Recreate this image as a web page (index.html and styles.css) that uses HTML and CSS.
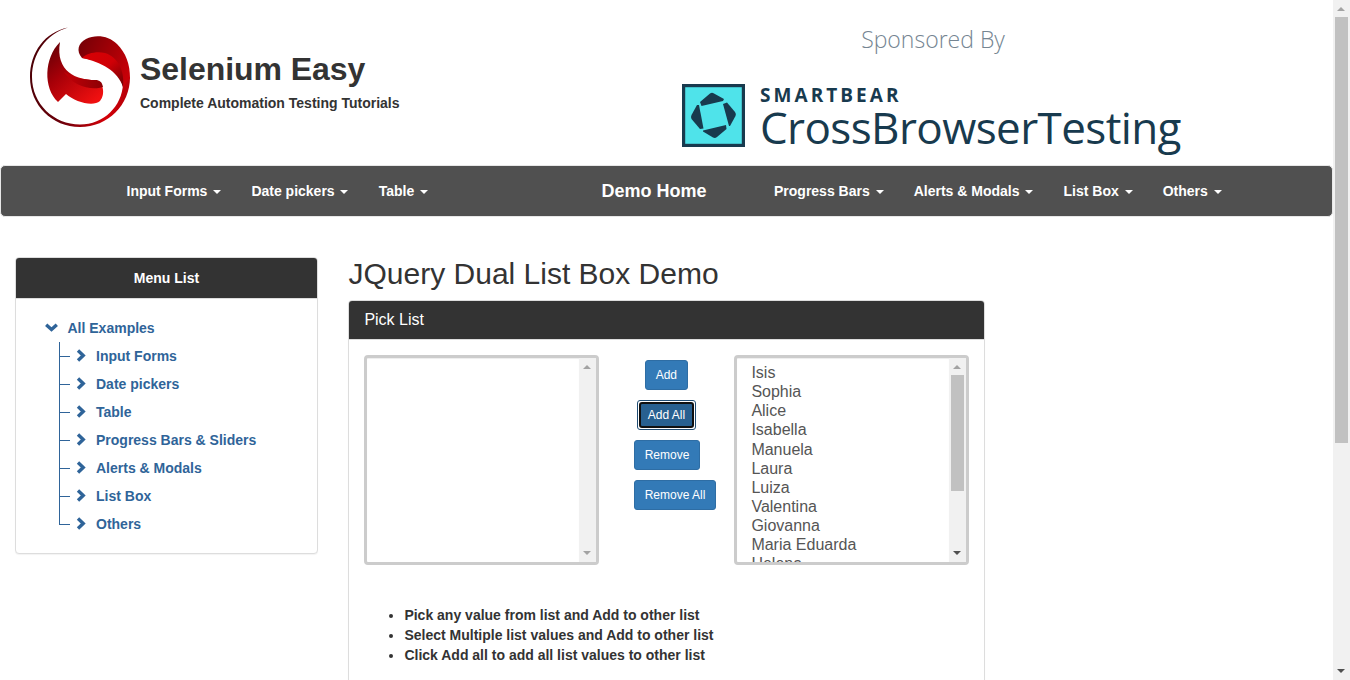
FILE: index.html
```html
<!DOCTYPE html>
<html lang="en">
<head>
<meta charset="utf-8">
<title>Selenium Easy - JQuery Dual List Box Demo</title>
<link rel="stylesheet" href="styles.css">
</head>
<body>
<div class="page">
  <header class="header">
    <div class="brand">
      <svg class="brand-logo" viewBox="0 0 100 100" width="100" height="100">
        <defs>
          <linearGradient id="ring" x1="0" y1=".3" x2="1" y2=".5"><stop offset="0" stop-color="#4a0006"/><stop offset=".45" stop-color="#70000a"/><stop offset=".85" stop-color="#d40008"/><stop offset="1" stop-color="#b80008"/></linearGradient>
          <linearGradient id="upper" x1="0" y1="0.2" x2="1" y2=".7"><stop offset="0" stop-color="#780006"/><stop offset=".6" stop-color="#a80006"/><stop offset="1" stop-color="#c80008"/></linearGradient>
          <linearGradient id="bright" x1="0" y1="0" x2="1" y2="1"><stop offset="0" stop-color="#d80004"/><stop offset=".5" stop-color="#d00006"/><stop offset="1" stop-color="#700004"/></linearGradient>
          <linearGradient id="lower" x1="0" y1="0" x2=".8" y2="1"><stop offset="0" stop-color="#5c0006"/><stop offset=".45" stop-color="#a80008"/><stop offset="1" stop-color="#f01010"/></linearGradient>
          <linearGradient id="fold" x1="0" y1="0" x2="1" y2="0"><stop offset="0" stop-color="#c40008"/><stop offset="1" stop-color="#8c0004"/></linearGradient>
        </defs>
        <path fill="url(#ring)" d="M38 .4C15 5 0 25 0 50c0 28 22 50 50 50s50-22 50-50L93 57C92 79 74 97.500 50 97.500 24 97.500 2 77 2 50 2 27 16 7 38 .4Z"/>
        <path fill="url(#upper)" d="M52 31C46 24 48 16 56 12 66 7 79 9 87 17c9 9 13 20 13 34l-7 9C91 45 75 34 52 31Z"/>
        <path fill="url(#bright)" d="M52 31C57 26 67 24 75 26 88 30 95 44 93 60 88 44 71 35 52 31Z"/>
        <path fill="url(#lower)" d="M30 15C14 31 13 61 28 75L36 67C45 75 63 80 70 74 76 67 73 54 65 53 47 53 25 45 30 15Z"/>
        <path fill="url(#fold)" d="M34 45C43 59 61 64 73 60 72 55 70 53 65 53 55 53 43 51 34 45Z"/>
      </svg>
      <div class="brand-text">
        <h1 class="brand-name">Selenium Easy</h1>
        <div class="brand-tagline">Complete Automation Testing Tutorials</div>
      </div>
    </div>
    <div class="sponsor">
      <div class="sponsor-label">Sponsored By</div>
      <div class="sponsor-row">
        <svg class="sponsor-mark" viewBox="0 0 63 63" width="63" height="63">
          <rect x="1.6" y="1.6" width="59.8" height="59.8" fill="#4fe3ea" stroke="#183a4e" stroke-width="3.2"/>
          <g fill="#183a4e">
            <path d="M19.500 22 18 18 28 9.500Q30 8 32 9.500L42 15 41 17Z"/>
            <path d="M41 20 45 18.500 53 28Q54.500 30 53.500 32L48 42 47 42Z"/>
            <path d="M44 41 44.500 45 35 53Q33 54.500 31 53.500L21 47.500 21 46.500Z"/>
            <path d="M21.500 44.500 18 45 9.500 35Q8.500 33 9.500 31L15 21 17 21Z"/>
          </g>
        </svg>
        <div>
          <div class="sponsor-company">SMARTBEAR</div>
          <div class="sponsor-product">CrossBrowserTesting</div>
        </div>
      </div>
    </div>
  </header>

  <nav class="navbar">
    <div class="nav-group nav-left">
      <a class="nav-link">Input Forms<i class="caret"></i></a>
      <a class="nav-link">Date pickers<i class="caret"></i></a>
      <a class="nav-link">Table<i class="caret"></i></a>
    </div>
    <a class="nav-home">Demo Home</a>
    <div class="nav-group">
      <a class="nav-link">Progress Bars<i class="caret"></i></a>
      <a class="nav-link">Alerts &amp; Modals<i class="caret"></i></a>
      <a class="nav-link">List Box<i class="caret"></i></a>
      <a class="nav-link">Others<i class="caret"></i></a>
    </div>
  </nav>

  <div class="columns">
    <aside class="panel sidebar">
      <div class="panel-head menu-head">Menu List</div>
      <div class="tree">
        <a class="tree-root"><svg class="chevron-down" viewBox="0 0 13 9" width="13" height="9"><path d="M1.2 1.8 6.5 6.5 11.8 1.8"/></svg>All Examples</a>
        <ul class="tree-list">
          <li class="tree-item"><svg class="chevron" viewBox="0 0 10 13" width="10" height="13"><path d="M2 1.6 7.2 6.5 2 11.4"/></svg>Input Forms</li>
          <li class="tree-item"><svg class="chevron" viewBox="0 0 10 13" width="10" height="13"><path d="M2 1.6 7.2 6.5 2 11.4"/></svg>Date pickers</li>
          <li class="tree-item"><svg class="chevron" viewBox="0 0 10 13" width="10" height="13"><path d="M2 1.6 7.2 6.5 2 11.4"/></svg>Table</li>
          <li class="tree-item"><svg class="chevron" viewBox="0 0 10 13" width="10" height="13"><path d="M2 1.6 7.2 6.5 2 11.4"/></svg>Progress Bars &amp; Sliders</li>
          <li class="tree-item"><svg class="chevron" viewBox="0 0 10 13" width="10" height="13"><path d="M2 1.6 7.2 6.5 2 11.4"/></svg>Alerts &amp; Modals</li>
          <li class="tree-item"><svg class="chevron" viewBox="0 0 10 13" width="10" height="13"><path d="M2 1.6 7.2 6.5 2 11.4"/></svg>List Box</li>
          <li class="tree-item"><svg class="chevron" viewBox="0 0 10 13" width="10" height="13"><path d="M2 1.6 7.2 6.5 2 11.4"/></svg>Others</li>
        </ul>
      </div>
    </aside>

    <main class="main">
      <h2 class="title">JQuery Dual List Box Demo</h2>
      <section class="panel picker">
        <div class="panel-head pick-head">Pick List</div>
        <div class="pick-body">
          <div class="pick-row">
            <div class="listbox">
              <div class="options"></div>
              <div class="scrollbar">
                <i class="arrow arrow-up muted"></i>
                <i class="arrow arrow-down muted"></i>
              </div>
            </div>
            <div class="actions">
              <button class="btn btn-add">Add</button>
              <button class="btn btn-add-all">Add All</button>
              <button class="btn">Remove</button>
              <button class="btn">Remove All</button>
            </div>
            <div class="listbox">
              <div class="options">
                <div>Isis</div><div>Sophia</div><div>Alice</div><div>Isabella</div><div>Manuela</div><div>Laura</div><div>Luiza</div><div>Valentina</div><div>Giovanna</div><div>Maria Eduarda</div><div>Helena</div>
              </div>
              <div class="scrollbar">
                <i class="arrow arrow-up muted"></i>
                <span class="thumb list-thumb"></span>
                <i class="arrow arrow-down"></i>
              </div>
            </div>
          </div>
          <ul class="notes">
            <li>Pick any value from list and Add to other list</li>
            <li>Select Multiple list values and Add to other list</li>
            <li>Click Add all to add all list values to other list</li>
          </ul>
        </div>
      </section>
    </main>
  </div>
</div>
<div class="scrollbar page-scrollbar">
  <i class="arrow arrow-up muted"></i>
  <span class="thumb page-thumb"></span>
  <i class="arrow arrow-down"></i>
</div>
</body>
</html>
```
FILE: styles.css
```css
* { box-sizing: border-box; }
body {
  margin: 0;
  height: 680px;
  display: flex;
  overflow: hidden;
  background: #fff;
  color: #333;
  font: 14px/20px "Liberation Sans", Arial, sans-serif;
}
h1, h2, ul { margin: 0; padding: 0; font-weight: inherit; }
.page { width: 1333px; height: 680px; overflow: hidden; }

.header { display: flex; height: 165px; padding: 26px 0 0 30px; }
.brand { display: flex; gap: 10px; width: 652px; padding-top: 1px; }
.brand-logo { flex: none; }
.brand-text { padding-top: 22px; }
.brand-name { font-size: 32px; line-height: 40px; font-weight: bold; letter-spacing: -.05px; white-space: nowrap; }
.brand-tagline { padding-top: 4px; font-weight: bold; white-space: nowrap; }
.sponsor { width: 502px; font-family: "Open Sans", sans-serif; }
.sponsor-label { height: 58px; line-height: 26px; text-align: center; font-size: 23px; font-weight: 300; color: #758592; }
.sponsor-row { display: flex; gap: 15px; color: #183a4e; }
.sponsor-mark { flex: none; }
.sponsor-company { height: 21px; font-size: 19px; line-height: 22px; font-weight: 700; letter-spacing: 3.05px; }
.sponsor-product { font-size: 44px; line-height: 44px; letter-spacing: -.6px; white-space: nowrap; }

.navbar {
  display: flex;
  align-items: center;
  height: 52px;
  padding-left: 125.5px;
  background: #505050;
  border: 1px solid #e7e7e7;
  border-radius: 5px;
  color: #fff;
  font-weight: bold;
}
.nav-group { display: flex; gap: 30.2px; }
.nav-left { width: 475px; }
.nav-link { display: flex; align-items: center; gap: 5.8px; white-space: nowrap; }
.caret { border: 4px solid transparent; border-top-color: #fff; border-bottom: 0; margin-top: 2px; }
.nav-home { width: 172.5px; font-size: 18px; }

.columns { display: flex; gap: 30px; align-items: flex-start; padding: 40px 0 0 15px; }
.panel { border: 1px solid #ddd; border-radius: 4px; background: #fff; box-shadow: 0 1px 1px rgba(0, 0, 0, .05); }
.panel-head { background: #333; color: #fff; border-bottom: 1px solid #ddd; border-radius: 3px 3px 0 0; }
.sidebar { width: 303px; height: 297px; }
.menu-head { height: 41px; line-height: 40px; text-align: center; font-weight: bold; }
.tree { padding: 19px 0 0 29px; color: #2f6499; font-weight: bold; }
.tree-root { display: flex; align-items: center; gap: 9.5px; height: 20px; }
.chevron-down, .chevron { fill: none; stroke: #2f6499; stroke-width: 3.4; margin-bottom: 2px; }
.tree-list { list-style: none; margin: 4px 0 0 14px; }
.tree-item { position: relative; display: flex; align-items: center; gap: 10px; height: 28px; padding-left: 17px; }
.tree-item::before { content: ""; position: absolute; left: 0; top: -15px; width: 10px; height: 29px; border: solid #2f6499; border-width: 0 0 1px 1px; }
.tree-item:first-child::before { top: 0; height: 14px; }

.main { width: 637px; }
.title { height: 43px; padding-left: .5px; line-height: 33px; font-size: 30px; white-space: nowrap; }
.picker { height: 450px; }
.pick-head { height: 39px; line-height: 37px; padding-left: 15.4px; font-size: 16px; }
.pick-body { padding: 15px; }
.pick-row { display: flex; height: 210px; }
.listbox { display: flex; width: 235px; height: 210px; border: 3px solid #ccc; border-radius: 4px; overflow: hidden; }
.options { flex: 1; padding: 5px 0 0 14.4px; font-size: 16px; line-height: 19.12px; color: #555; box-shadow: inset 0 1px 1px rgba(0, 0, 0, .075); }
.actions { display: flex; flex-direction: column; align-items: flex-start; gap: 10px; width: 135px; padding: 5px 0 0 35px; }
.btn { height: 30px; padding: 0 9.7px; border: 1px solid #2e6da4; border-radius: 3px; background: #337ab7; color: #fff; font: 12px/18px "Liberation Sans", Arial, sans-serif; white-space: nowrap; }
.btn-add { margin-left: 11px; }
.btn-add-all { width: 59px; margin-left: 3px; padding: 0; background: #fff; border-color: #204d74; position: relative; z-index: 0; }
.btn-add-all::before { content: ""; position: absolute; z-index: -1; inset: 1px; border: 2px solid #101010; border-radius: 3px; background: #286090; }
.notes { padding: 40px 0 0 40.4px; font-weight: bold; }

.scrollbar { display: flex; flex-direction: column; flex: none; width: 17px; background: #f1f1f1; }
.arrow { margin-left: 4px; width: 8px; border: 4px solid transparent; }
.arrow-up { margin-top: 7px; border-top: 0; border-bottom-color: #505050; }
.arrow-down { margin-top: auto; margin-bottom: 7px; border-bottom: 0; border-top-color: #505050; }
.arrow-up.muted { border-bottom-color: #a3a3a3; }
.arrow-down.muted { border-top-color: #a3a3a3; }
.thumb { width: 13px; margin: 6px 0 0 2px; background: #c1c1c1; }
.list-thumb { height: 116px; }
.page-thumb { height: 426px; }
```
